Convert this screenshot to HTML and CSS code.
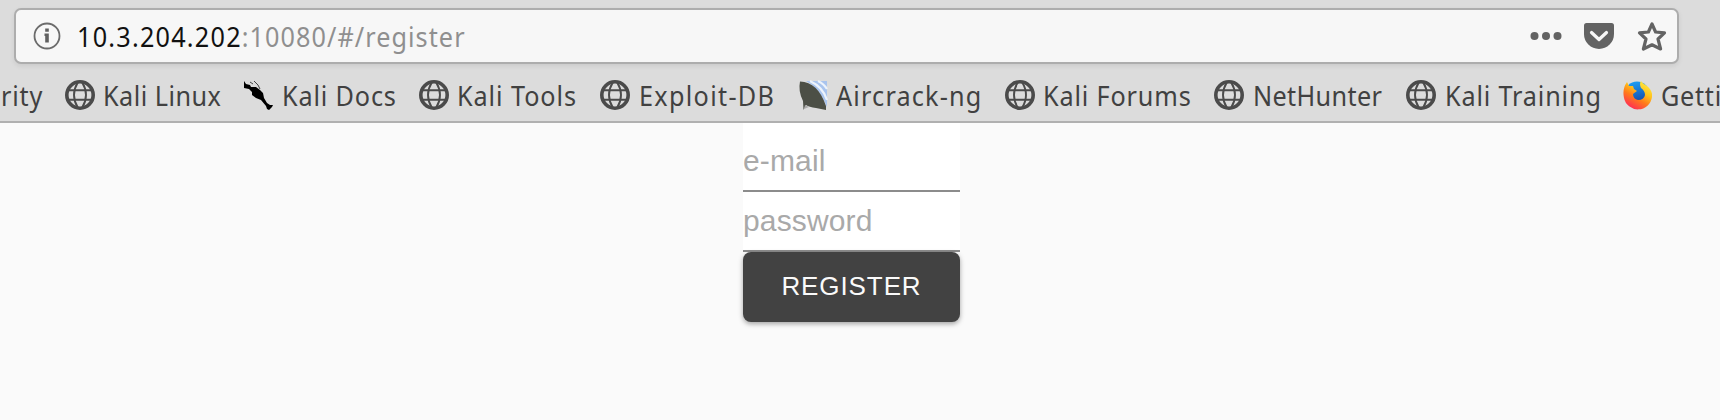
FILE: index.html
```html
<!DOCTYPE html>
<html lang="en">
<head>
<meta charset="utf-8">
<title>Register</title>
<link rel="stylesheet" href="styles.css">
</head>
<body>
<svg width="0" height="0" class="defs">
  <symbol id="globe" viewBox="0 0 30 30">
    <g fill="none" stroke="#4b4b4b">
      <circle cx="15" cy="15" r="13.2" stroke-width="3.6"/>
      <path d="M3 10.200H27M3 19.800H27" stroke-width="1.9"/>
      <path d="M13 2Q5 15 13 28M17 2Q25 15 17 28" stroke-width="1.9"/>
    </g>
  </symbol>
  <linearGradient id="fox" x1="0.800" y1="0" x2="0.200" y2="1">
    <stop offset="0" stop-color="#fff044"/>
    <stop offset="0.350" stop-color="#ffc21c"/>
    <stop offset="0.600" stop-color="#ff7a1a"/>
    <stop offset="1" stop-color="#ff1f60"/>
  </linearGradient>
  <linearGradient id="sphere" x1="0.300" y1="0" x2="0.500" y2="1">
    <stop offset="0" stop-color="#1ea0f5"/>
    <stop offset="1" stop-color="#123a9c"/>
  </linearGradient>
</svg>
<header class="chrome">
  <div class="urlbar">
    <svg class="info" viewBox="0 0 28 28"><circle cx="14" cy="14" r="12.500" fill="none" stroke="#6b6b6b" stroke-width="1.8"/><path d="M12.200 6.500h3.600v3.200h-3.600zM11.500 11.500h4.300v9h-3.600v-6.500h-.7z" fill="#606060"/></svg>
    <div class="url"><span class="host">10.3.204.202</span>:10080/#/register</div>
    <svg class="dots" viewBox="0 0 32 8"><g fill="#636363"><circle cx="4.500" cy="4" r="4"/><circle cx="16" cy="4" r="4"/><circle cx="27.500" cy="4" r="4"/></g></svg>
    <svg class="pocket" viewBox="0 0 32 28"><path d="M3.500 1H28.500Q31 1 31 3.500V12A15 15 0 0 1 1 12V3.500Q1 1 3.500 1Z" fill="#636363"/><path d="M8.500 10.500L16 17.500L23.500 10.500" fill="none" stroke="#f7f7f7" stroke-width="3.200" stroke-linecap="round" stroke-linejoin="round"/></svg>
    <svg class="star" viewBox="0 0 32 32"><path d="M16 4L19.600 12L28.500 12.900L22 19L24.600 29L16 24.800L7.400 29L10 19L3.500 12.900L12.400 12Z" fill="none" stroke="#636363" stroke-width="3.200" stroke-linejoin="round"/></svg>
  </div>
  <nav class="bookmarks">
    <a class="item security"><span class="label">rity</span></a>
    <a class="item linux"><svg class="icon"><use href="#globe"/></svg><span class="label">Kali Linux</span></a>
    <a class="item docs"><svg class="icon" viewBox="0 0 30 30"><path d="M1 1L3 4L7 5L8 7L13 7L17 10L20 13L21 18L24 23L27 25L30 25L29 27L26 30L24 29L23 26L18 20L13 18L9 15L9 12L6 9L1 8Z"/><path d="M7 2L10 4M11 1L15 5L17 9" stroke="#444" stroke-width="1" fill="none"/></svg><span class="label">Kali Docs</span></a>
    <a class="item tools"><svg class="icon"><use href="#globe"/></svg><span class="label">Kali Tools</span></a>
    <a class="item exploit"><svg class="icon"><use href="#globe"/></svg><span class="label">Exploit-DB</span></a>
    <a class="item aircrack"><svg class="icon" viewBox="0 0 30 30"><path d="M8 1H29V27Q22 8 8 1Z" fill="#a9c4ee"/><path d="M12 1Q25 7 29 20M20 1Q26 4 29 9" fill="none" stroke="#edf3fb" stroke-width="2.200"/><path d="M2 1.500Q20 2 28 26V30L18 28Q11 27 8 25L5.500 30L5 21Q0 11 2 1.500Z" fill="#4c4f46"/><path d="M7 25L11 27L6 29Z" fill="#aaa"/></svg><span class="label">Aircrack-ng</span></a>
    <a class="item forums"><svg class="icon"><use href="#globe"/></svg><span class="label">Kali Forums</span></a>
    <a class="item nethunter"><svg class="icon"><use href="#globe"/></svg><span class="label">NetHunter</span></a>
    <a class="item training"><svg class="icon"><use href="#globe"/></svg><span class="label">Kali Training</span></a>
    <a class="item getting"><svg class="icon" viewBox="0 0 30 30"><circle cx="15" cy="14" r="12.500" fill="url(#sphere)"/><path d="M19 1Q20 3 25 6Q31 11 30 17A14.200 14.200 0 0 1 2 18Q0 9 5 2L7 6L11 6L12 9L15 11L11 14Q11 19 16 20Q22 20 23 15Q23 11 19 8Q17 4 19 1Z" fill="url(#fox)"/></svg><span class="label">Getting Started</span></a>
  </nav>
</header>
<main class="page">
  <form class="form">
    <input class="field first" type="text" placeholder="e-mail">
    <input class="field" type="password" placeholder="password">
    <button class="submit" type="button">REGISTER</button>
  </form>
</main>
</body>
</html>
```
FILE: styles.css
```css
* { box-sizing: border-box; }
body { margin: 0; height: 420px; overflow: hidden; background: #fafafa; }
.defs { display: block; }
.chrome { height: 123px; padding-top: 8px; background: #dcdcdc; border-bottom: 2px solid #b0b0b0; overflow: hidden; font-family: "Noto Sans", sans-serif; font-size: 28px; }
.urlbar { display: flex; align-items: center; width: 1665px; height: 56px; margin-left: 14px; padding: 0 9px 0 17px; background: #f7f7f7; border: 2px solid #adadad; border-radius: 7px; box-shadow: 0 2px 5px rgba(0,0,0,.08); }
.info { width: 28px; height: 28px; margin-right: 16px; }
.url { flex: 1; color: #8f8f8f; white-space: nowrap; letter-spacing: 1.18px; transform-origin: left; transform: scaleX(.9); }
.host { color: #111; letter-spacing: 1.37px; }
.dots { width: 32px; height: 8px; margin-right: 21px; }
.pocket { width: 32px; height: 28px; margin-right: 21px; }
.star { width: 32px; height: 32px; }
.bookmarks { display: flex; height: 56px; align-items: center; width: 1900px; padding-top: 5px; color: #414141; }
.item { display: flex; align-items: center; flex: none; gap: 8px; white-space: nowrap; }
.icon { width: 30px; height: 30px; flex: none; }
.label { transform-origin: left; transform: scaleX(.9); }
.security { width: 65px; padding-left: 1px; letter-spacing: .9px; }
.linux { width: 178px; letter-spacing: .55px; }
.docs { width: 176px; gap: 9px; letter-spacing: .95px; }
.tools { width: 181px; letter-spacing: 1.04px; }
.exploit { width: 198px; gap: 9px; letter-spacing: 1.46px; }
.aircrack { width: 207px; letter-spacing: 1.33px; }
.forums { width: 209px; letter-spacing: .95px; }
.nethunter { width: 192px; gap: 9px; letter-spacing: .4px; }
.training { width: 216px; gap: 9px; letter-spacing: .94px; }
.getting { gap: 9px; letter-spacing: .8px; }
.page { display: flex; justify-content: center; padding-right: 17px; }
.form { display: flex; flex-direction: column; width: 217px; }
.field { width: 100%; height: 60px; border: 0; border-bottom: 2px solid #8c8c8c; background: #fff; padding: 0; font: 30px "Liberation Sans", sans-serif; letter-spacing: .15px; }
.first { height: 69px; padding-top: 9px; }
.field::placeholder { color: #a9a9a9; opacity: 1; }
.submit { height: 70px; padding-bottom: 2px; border: 0; border-radius: 8px; background: #424242; color: #fafafa; font: 26px "Liberation Sans", sans-serif; letter-spacing: .9px; box-shadow: 0 2px 5px rgba(0,0,0,.35); }
```
